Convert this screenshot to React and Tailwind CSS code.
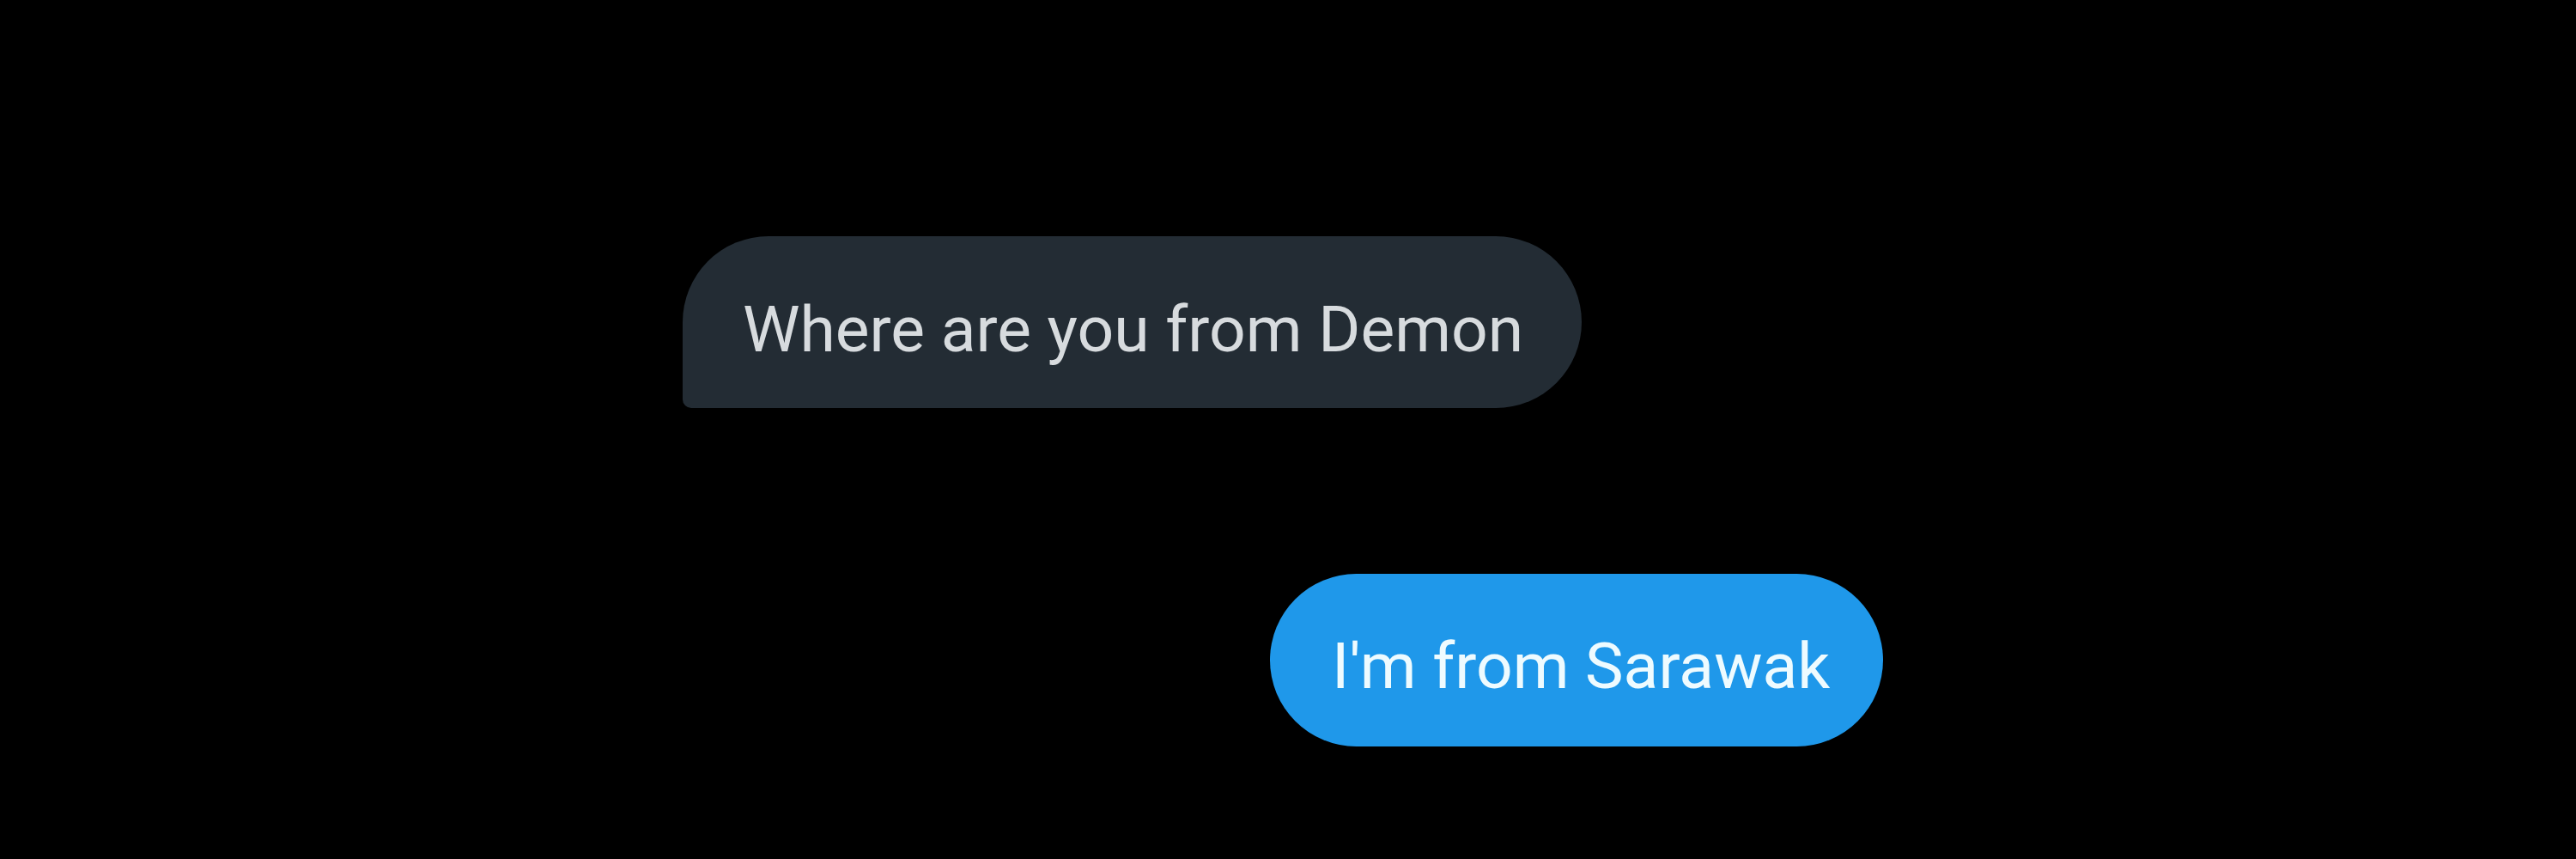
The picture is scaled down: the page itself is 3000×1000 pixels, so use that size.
// Two chat bubbles on a black screen: incoming (slate) and outgoing (blue).
function Bubble({ side, children }) {
  const incoming = side === 'in'
  return (
    <div
      className={
        incoming
          ? 'self-start w-[1047px] h-[200px] flex items-center pt-[16px] px-[70px] rounded-tl-[100px] rounded-tr-[100px] rounded-br-[100px] rounded-bl-[10px] bg-[#232c34] text-[#d7dbde]'
          : 'self-end w-[714px] h-[201px] flex items-center pt-[14px] px-[72px] rounded-full bg-[#1f98ea] text-[#eefbff]'
      }
    >
      <span className="text-[75px] leading-none whitespace-nowrap">{children}</span>
    </div>
  )
}

export default function App() {
  return (
    <div className="w-[3000px] h-[1000px] bg-black overflow-hidden" style={{ fontFamily: 'Roboto, "Noto Sans", sans-serif' }}>
      <div className="ml-[795px] w-[1398px] pt-[275px] flex flex-col gap-[193px]">
        <Bubble side="in">Where are you from Demon</Bubble>
        <Bubble side="out">I'm from Sarawak</Bubble>
      </div>
    </div>
  )
}
